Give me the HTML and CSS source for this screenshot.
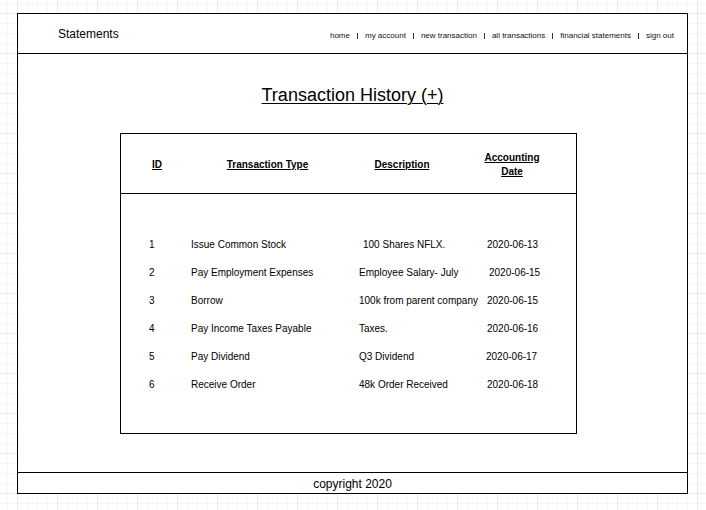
FILE: index.html
```html
<!DOCTYPE html>
<html lang="en">
<head>
<meta charset="utf-8">
<title>Statements</title>
<link rel="stylesheet" href="styles.css">
</head>
<body>
<div class="frame">
  <header class="header">
    <div class="brand">Statements</div>
    <nav class="nav">
      <span>home</span><span class="sep"></span>
      <span>my account</span><span class="sep"></span>
      <span>new transaction</span><span class="sep"></span>
      <span>all transactions</span><span class="sep"></span>
      <span>financial statements</span><span class="sep"></span>
      <span>sign out</span>
    </nav>
  </header>
  <main class="main">
    <h1 class="title">Transaction History (+)</h1>
    <section class="table">
      <div class="thead">
        <div class="th">ID</div>
        <div class="th">Transaction Type</div>
        <div class="th">Description</div>
        <div class="th">Accounting<br>Date</div>
      </div>
      <div class="tbody">
        <div class="row"><span>1</span><span>Issue Common Stock</span><span class="indent">100 Shares NFLX.</span><span>2020-06-13</span></div>
        <div class="row"><span>2</span><span>Pay Employment Expenses</span><span>Employee Salary- July</span><span class="nudge-r">2020-06-15</span></div>
        <div class="row"><span>3</span><span>Borrow</span><span>100k from parent company</span><span>2020-06-15</span></div>
        <div class="row"><span>4</span><span>Pay Income Taxes Payable</span><span>Taxes.</span><span>2020-06-16</span></div>
        <div class="row"><span>5</span><span>Pay Dividend</span><span>Q3 Dividend</span><span class="nudge-l">2020-06-17</span></div>
        <div class="row"><span>6</span><span>Receive Order</span><span>48k Order Received</span><span>2020-06-18</span></div>
      </div>
    </section>
  </main>
  <footer class="footer">copyright 2020</footer>
</div>
</body>
</html>
```

FILE: styles.css
```css
html, body {
  margin: 0;
  padding: 0;
}

body {
  width: 706px;
  height: 510px;
  overflow: hidden;
  font-family: "Liberation Sans", Arial, sans-serif;
  color: #000;
  background-color: #fff;
  background-image:
    linear-gradient(#e9e9e9 1px, transparent 1px),
    linear-gradient(90deg, #e9e9e9 1px, transparent 1px),
    linear-gradient(#f5f5f5 1px, transparent 1px),
    linear-gradient(90deg, #f5f5f5 1px, transparent 1px);
  background-size: 40px 40px, 40px 40px, 10px 10px, 10px 10px;
  background-position: 17px 13px, 17px 13px, 17px 13px, 17px 13px;
}

.frame {
  box-sizing: border-box;
  margin: 13px 0 0 17px;
  width: 671px;
  height: 481px;
  border: 1px solid #000;
  background: #fff;
  display: flex;
  flex-direction: column;
}

.header {
  box-sizing: border-box;
  height: 40px;
  border-bottom: 1px solid #000;
  display: flex;
  align-items: center;
  justify-content: space-between;
  padding: 0 13px 0 40px;
}

.brand {
  font-size: 12px;
  line-height: 14px;
  padding-top: 1px;
}

.nav {
  display: flex;
  align-items: center;
  font-size: 8px;
  line-height: 10px;
  padding-top: 4px;
  white-space: pre;
  color: #111;
}

.sep {
  display: inline-block;
  width: 1px;
  height: 6px;
  background: #333;
  margin: 0 7px;
}

.main {
  flex: 1;
  display: flex;
  flex-direction: column;
  align-items: center;
}

.title {
  margin: 31px 0 0;
  font-size: 18px;
  line-height: 20px;
  font-weight: normal;
  text-decoration: underline;
  text-underline-offset: 2px;
  text-decoration-thickness: 1px;
}

.table {
  box-sizing: border-box;
  align-self: flex-start;
  margin: 28px 0 0 102px;
  width: 457px;
  height: 301px;
  border: 1px solid #000;
  display: flex;
  flex-direction: column;
}

.thead {
  box-sizing: border-box;
  height: 60px;
  padding-top: 2px;
  border-bottom: 1px solid #000;
  display: grid;
  grid-template-columns: 72px 149px 120px 100px;
  align-items: center;
}

.th {
  font-size: 10px;
  line-height: 14px;
  font-weight: bold;
  text-align: center;
  text-decoration: underline;
  text-decoration-thickness: 1px;
}

.tbody {
  padding: 37px 0 0 28px;
}

.row {
  height: 28px;
  display: grid;
  grid-template-columns: 42px 168px 128px 1fr;
  align-items: center;
  font-size: 10px;
  line-height: 12px;
  white-space: nowrap;
}

.indent {
  padding-left: 4px;
}

.nudge-r {
  padding-left: 2px;
}

.nudge-l {
  margin-left: -1px;
}

.footer {
  box-sizing: border-box;
  height: 21px;
  padding-top: 1px;
  border-top: 1px solid #000;
  display: flex;
  align-items: center;
  justify-content: center;
  font-size: 12px;
  line-height: 14px;
}
```
